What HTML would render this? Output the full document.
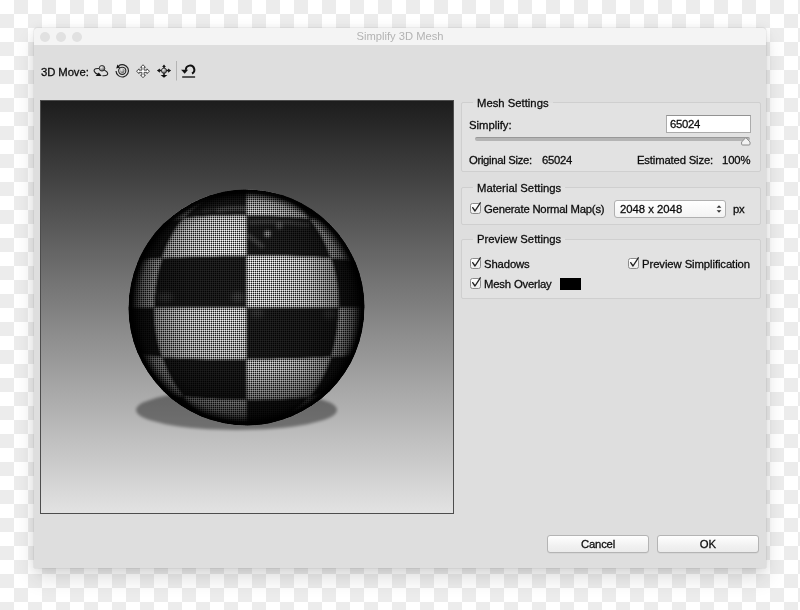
<!DOCTYPE html>
<html><head><meta charset="utf-8"><title>Simplify 3D Mesh</title>
<style>
*{box-sizing:border-box;margin:0;padding:0}
html,body{width:800px;height:610px;overflow:hidden}
body{position:relative;font-family:"Liberation Sans",sans-serif;font-size:11px;color:#0c0c0c;-webkit-text-stroke:.28px #0c0c0c;
 background-color:#fff;
 background-image:conic-gradient(#ececec 25%,#fff 0 50%,#ececec 0 75%,#fff 0);
 background-size:28px 28px;background-position:0 0}
.win{position:absolute;left:34px;top:28px;width:732px;height:540px;background:#dfdede;border-radius:3px 3px 0 0;
 box-shadow:0 11px 20px rgba(0,0,0,.12),0 1px 12px rgba(0,0,0,.09),0 0 1px rgba(0,0,0,.45)}
.tb{position:absolute;left:0;top:0;right:0;height:17px;background:#f4f4f4;border-radius:3px 3px 0 0}
.tl{position:absolute;top:4px;width:10px;height:10px;border-radius:50%;background:#e1e1e1}
.title{position:absolute;left:0;right:0;top:2px;text-align:center;font-size:11.2px;color:#b3b3b3;-webkit-text-stroke:0;line-height:13px}
.abs{position:absolute;white-space:nowrap;line-height:14px}
.grp{position:absolute;border:1px solid #cfcfcf;border-radius:2px;background:#e3e2e2}
.gt{position:absolute;background:linear-gradient(#dfdede 0,#dfdede 5.5px,#e3e2e2 5.5px);padding:0 4px;line-height:12px;font-size:11.3px}
.cb{position:absolute;width:11px;height:11px;border:1px solid #8c8c8c;border-radius:2.5px;background:linear-gradient(#fff,#ececec)}
.btn{position:absolute;height:18px;border:1px solid #b4b4b4;border-radius:3px;background:linear-gradient(#fff,#f1f1f1 60%,#ebebeb);
 text-align:center;line-height:16px;font-size:11.3px;box-shadow:0 .5px 0 rgba(0,0,0,.08)}
</style></head><body><div id="root" style="position:absolute;left:0;top:0;width:800px;height:610px;filter:grayscale(1)">
<div class="win">
<div class="tb"><div class="tl" style="left:6px"></div><div class="tl" style="left:22px"></div><div class="tl" style="left:38px"></div>
<div class="title">Simplify 3D Mesh</div></div>
</div>
<div class="abs" style="left:41px;top:65px;font-size:11.3px;letter-spacing:-.08px">3D Move:</div>
<svg class="abs" style="left:90px;top:56px" width="112" height="30" viewBox="90 56 112 30">
<defs>
<radialGradient id="ball" cx=".35" cy=".3" r=".8"><stop offset="0" stop-color="#f2f2f2"/><stop offset=".55" stop-color="#9a9a9a"/><stop offset="1" stop-color="#3a3a3a"/></radialGradient>
</defs>
<!-- orbit -->
<g transform="rotate(16 101.2 72)"><path d="M103.4 75.2 A7 3.2 0 1 0 99.2 75.3" fill="none" stroke="#222" stroke-width="1.1"/></g>
<path d="M95.7 75.9 L101.7 75.9 L98.8 72.4z" fill="#111"/>
<circle cx="102" cy="68.3" r="2.8" fill="url(#ball)" stroke="#2a2a2a" stroke-width=".9"/>
<!-- roll -->
<path d="M118.7 65.7 A6.2 6.2 0 1 1 116.05 70.9" fill="none" stroke="#222" stroke-width="1.2"/>
<path d="M116.2 68.5 L120.2 67.5 L117.5 64.6z" fill="#111"/>
<circle cx="122.25" cy="70.8" r="3.6" fill="#e8e8e8" stroke="#222" stroke-width="1.1"/>
<circle cx="122.25" cy="70.8" r="2.3" fill="url(#ball)"/>
<!-- pan -->
<path d="M143.00 64.75L145.40 67.35L144.10 67.35L144.10 70.15L146.90 70.15L146.90 68.85L149.50 71.25L146.90 73.65L146.90 72.35L144.10 72.35L144.10 75.15L145.40 75.15L143.00 77.75L140.60 75.15L141.90 75.15L141.90 72.35L139.10 72.35L139.10 73.65L136.50 71.25L139.10 68.85L139.10 70.15L141.90 70.15L141.90 67.35L140.60 67.35z" fill="#fff" stroke="#3a3a3a" stroke-width=".9" stroke-linejoin="round"/>
<!-- slide -->
<path d="M164 64.6 L165.9 66.9 H162.1z M156.9 70.6 L159.9 68.5 V72.7z M171.1 70.6 L168.1 68.5 V72.7z M164 77.8 L160.6 75.1 H167.4z" fill="#111"/>
<path d="M164 66.5V75.5M159.5 70.6H168.5" stroke="#111" stroke-width="1.5"/>
<circle cx="164" cy="70.7" r="2.6" fill="url(#ball)" stroke="#222" stroke-width=".8"/>
<!-- sep -->
<rect x="176" y="61" width="1" height="19.5" fill="#b4b4b4"/>
<!-- reset -->
<path d="M185.9 69.9 A4.2 4.2 0 1 1 192.0 73.5" fill="none" stroke="#111" stroke-width="2"/>
<path d="M181.1 69.8 H188.1 L184.7 73.7z" fill="#111"/>
<rect x="182.2" y="76.2" width="12.9" height="1.6" fill="#333"/>
</svg>

<svg class="abs" style="left:40px;top:100px" width="414" height="414" viewBox="40 100 414 414">
<defs>
<linearGradient id="bg" x1="0" y1="0" x2="0" y2="1"><stop offset="0" stop-color="#1c1c1c"/><stop offset="1" stop-color="#e3e3e3"/></linearGradient>
<clipPath id="sc"><circle cx="246.5" cy="307.5" r="118.0"/></clipPath>
<pattern id="mesh" x="0" y="0" width="2" height="2" patternUnits="userSpaceOnUse"><rect x="1" y="1" width="1" height="1" fill="#000" fill-opacity=".9"/><rect x="1" y="0" width="1" height="1" fill="#000" fill-opacity=".32"/><rect x="0" y="1" width="1" height="1" fill="#000" fill-opacity=".32"/></pattern>
<radialGradient id="rim" cx="246.5" cy="307.5" r="118.0" gradientUnits="userSpaceOnUse">
<stop offset=".6" stop-color="#000" stop-opacity="0"/><stop offset=".82" stop-color="#000" stop-opacity=".1"/><stop offset=".91" stop-color="#000" stop-opacity=".32"/><stop offset=".95" stop-color="#000" stop-opacity=".7"/><stop offset=".972" stop-color="#000" stop-opacity=".96"/><stop offset="1" stop-color="#000" stop-opacity="1"/></radialGradient>
<linearGradient id="side" x1="0" y1="0" x2="1" y2="0"><stop offset="0" stop-color="#000" stop-opacity=".7"/><stop offset=".06" stop-color="#000" stop-opacity=".5"/><stop offset=".14" stop-color="#000" stop-opacity=".3"/><stop offset=".26" stop-color="#000" stop-opacity=".08"/><stop offset=".4" stop-color="#000" stop-opacity="0"/><stop offset=".6" stop-color="#000" stop-opacity="0"/><stop offset=".74" stop-color="#000" stop-opacity=".08"/><stop offset=".86" stop-color="#000" stop-opacity=".3"/><stop offset=".94" stop-color="#000" stop-opacity=".5"/><stop offset="1" stop-color="#000" stop-opacity=".7"/></linearGradient>
<linearGradient id="shade" x1="0" y1="0" x2="0" y2="1"><stop offset="0" stop-color="#000" stop-opacity="0"/><stop offset=".25" stop-color="#000" stop-opacity="0"/><stop offset=".55" stop-color="#000" stop-opacity=".04"/><stop offset=".76" stop-color="#000" stop-opacity=".16"/><stop offset=".86" stop-color="#000" stop-opacity=".4"/><stop offset="1" stop-color="#000" stop-opacity=".65"/></linearGradient>
<filter id="bl" x="-30%" y="-30%" width="160%" height="160%"><feGaussianBlur stdDeviation="3"/></filter>
<filter id="b1" x="-10%" y="-10%" width="120%" height="120%"><feGaussianBlur stdDeviation="0.8"/></filter>
<filter id="b3" x="-50%" y="-50%" width="200%" height="200%"><feGaussianBlur stdDeviation="1.6"/></filter>
<filter id="b15" x="-10%" y="-30%" width="120%" height="160%"><feGaussianBlur stdDeviation="1.4"/></filter>
<filter id="b25" x="-50%" y="-50%" width="200%" height="200%"><feGaussianBlur stdDeviation="2.6"/></filter>
<filter id="b2" x="-50%" y="-50%" width="200%" height="200%"><feGaussianBlur stdDeviation="4"/></filter>
</defs>
<rect x="40" y="100" width="414" height="414" fill="url(#bg)"/>
<ellipse cx="236.5" cy="410" rx="100.5" ry="20" fill="#000" fill-opacity=".4" filter="url(#b15)"/>
<g clip-path="url(#sc)">
<circle cx="246.5" cy="307.5" r="118.0" fill="#1a1a1a"/>
<g filter="url(#b1)">
<path fill="#fbfbfb" d="M204.5 197.2L204.5 197.2L204.5 197.2L204.5 197.2L204.5 197.2L204.5 197.2L204.5 197.2L205.4 196.9L206.7 196.5L208.2 196.2L209.8 195.8L211.6 195.5L213.6 195.2L213.6 195.2L216.3 194.1L219.0 193.1L221.8 192.3L224.5 191.6L227.3 191.1L231.6 190.4L238.9 189.7L246.4 189.5L246.4 189.5L246.4 189.5L246.4 189.5L246.4 189.5L246.4 189.5L246.4 189.5L246.4 189.5L246.4 189.5L246.4 189.5L246.4 189.5L246.4 189.5L246.4 189.5L246.4 189.5L246.4 189.5L246.4 189.5L246.4 189.5L246.4 189.5L246.4 189.5L246.4 189.5L246.4 189.5L246.4 189.5L246.4 189.5L238.9 189.7L231.6 190.4L226.2 191.3L221.3 192.2L216.8 193.3L212.6 194.5L208.5 195.8L204.5 197.2ZM164.0 223.1L164.0 223.1L164.0 223.1L164.0 223.1L164.6 222.7L165.6 222.1L167.1 221.5L168.9 220.9L171.1 220.4L173.6 219.8L176.5 219.3L179.8 218.8L183.4 218.3L183.4 218.3L185.7 215.7L188.0 213.2L190.4 210.8L192.8 208.6L195.3 206.4L197.8 204.4L200.4 202.5L202.9 200.8L205.6 199.2L208.2 197.7L210.9 196.4L213.6 195.2L213.6 195.2L211.6 195.5L209.8 195.8L208.2 196.2L206.7 196.5L205.4 196.9L204.5 197.2L204.5 197.2L204.5 197.2L204.5 197.2L204.5 197.2L204.5 197.2L204.5 197.2L204.5 197.2L200.6 198.8L196.8 200.5L193.2 202.2L189.6 204.1L186.1 206.1L182.7 208.3L179.3 210.5L176.1 212.8L172.9 215.2L169.9 217.8L166.9 220.4L164.0 223.1ZM128.5 307.5L128.5 307.5L128.5 307.5L128.6 307.5L129.3 307.5L130.4 307.5L132.2 307.5L134.4 307.5L137.3 307.5L140.7 307.5L144.6 307.5L149.2 307.5L154.2 307.5L154.2 307.5L154.3 303.2L154.4 299.0L154.7 294.7L155.1 290.5L155.6 286.3L156.2 282.1L156.9 278.0L157.7 273.9L158.6 269.8L159.7 265.8L160.8 261.9L162.0 258.0L162.0 258.0L157.3 258.4L153.1 258.7L149.4 259.1L146.2 259.5L143.5 259.9L141.3 260.4L139.7 260.8L138.5 261.2L137.8 261.6L137.7 261.8L137.7 261.8L137.7 261.8L137.7 261.8L136.2 265.5L134.9 269.1L133.7 272.9L132.6 276.6L131.7 280.4L130.8 284.2L130.1 288.1L129.5 291.9L129.1 295.8L128.8 299.7L128.6 303.6L128.5 307.5ZM164.0 391.9L164.0 391.9L164.0 391.9L164.0 391.9L164.6 392.3L165.6 392.9L167.1 393.5L168.9 394.1L171.1 394.6L173.6 395.2L176.5 395.7L179.8 396.2L183.4 396.7L183.4 396.7L181.2 393.9L179.1 391.1L177.0 388.1L175.0 385.0L173.1 381.9L171.3 378.6L169.5 375.2L167.8 371.7L166.2 368.2L164.7 364.5L163.3 360.8L162.0 357.0L162.0 357.0L157.3 356.6L153.1 356.3L149.4 355.9L146.2 355.5L143.5 355.1L141.3 354.6L139.7 354.2L138.5 353.8L137.8 353.4L137.7 353.2L137.7 353.2L137.7 353.2L137.7 353.2L139.3 356.8L141.0 360.3L142.8 363.8L144.7 367.2L146.7 370.5L148.9 373.8L151.2 377.0L153.5 380.2L156.0 383.2L158.6 386.2L161.2 389.1L164.0 391.9ZM162.0 258.0L167.2 257.7L172.8 257.3L178.8 257.0L185.3 256.8L192.1 256.5L199.2 256.3L206.6 256.1L214.3 256.0L222.2 255.8L230.2 255.7L238.3 255.7L246.5 255.7L246.5 255.7L246.5 251.7L246.5 247.9L246.5 244.1L246.5 240.5L246.5 236.9L246.5 233.4L246.5 230.1L246.5 226.9L246.5 223.8L246.5 220.8L246.5 217.9L246.5 215.2L246.5 215.2L240.5 215.2L234.5 215.3L228.5 215.4L222.7 215.6L217.0 215.8L211.5 216.0L206.2 216.3L201.1 216.7L196.2 217.0L191.7 217.4L187.4 217.9L183.4 218.3L183.4 218.3L181.2 221.1L179.1 223.9L177.0 226.9L175.0 230.0L173.1 233.1L171.3 236.4L169.5 239.8L167.8 243.3L166.2 246.8L164.7 250.5L163.3 254.2L162.0 258.0ZM162.0 357.0L167.2 357.3L172.8 357.7L178.8 358.0L185.3 358.2L192.1 358.5L199.2 358.7L206.6 358.9L214.3 359.0L222.2 359.2L230.2 359.3L238.3 359.3L246.5 359.3L246.5 359.3L246.5 355.3L246.5 351.2L246.5 347.0L246.5 342.8L246.5 338.5L246.5 334.2L246.5 329.8L246.5 325.4L246.5 320.9L246.5 316.5L246.5 312.0L246.5 307.5L246.5 307.5L237.5 307.5L228.6 307.5L219.8 307.5L211.2 307.5L202.8 307.5L194.7 307.5L186.9 307.5L179.5 307.5L172.4 307.5L165.9 307.5L159.8 307.5L154.2 307.5L154.2 307.5L154.3 311.8L154.4 316.0L154.7 320.3L155.1 324.5L155.6 328.7L156.2 332.9L156.9 337.0L157.7 341.1L158.6 345.2L159.7 349.2L160.8 353.1L162.0 357.0ZM213.6 419.8L215.7 420.1L218.0 420.4L220.5 420.7L223.0 420.9L225.7 421.1L228.5 421.3L231.3 421.5L234.3 421.6L237.3 421.7L240.3 421.8L243.4 421.8L246.5 421.8L246.5 421.8L246.5 420.8L246.5 419.6L246.5 418.2L246.5 416.7L246.5 415.1L246.5 413.3L246.5 411.4L246.5 409.4L246.5 407.2L246.5 404.8L246.5 402.4L246.5 399.8L246.5 399.8L240.5 399.8L234.5 399.7L228.5 399.6L222.7 399.4L217.0 399.2L211.5 399.0L206.2 398.7L201.1 398.3L196.2 398.0L191.7 397.6L187.4 397.1L183.4 396.7L183.4 396.7L185.7 399.3L188.0 401.8L190.4 404.2L192.8 406.4L195.3 408.6L197.8 410.6L200.4 412.5L202.9 414.2L205.6 415.8L208.2 417.3L210.9 418.6L213.6 419.8ZM246.4 425.5L246.4 425.5L246.4 425.5L246.4 425.5L246.4 425.5L246.4 425.5L246.4 425.5L246.4 425.5L246.4 425.5L246.4 425.5L246.4 425.5L246.4 425.5L246.5 425.5L246.5 425.5L246.5 425.5L246.5 425.5L246.5 425.5L246.5 425.5L246.5 425.5L246.5 425.4L246.5 425.1L246.5 424.7L246.5 424.2L246.5 423.6L246.5 422.8L246.5 421.8L246.5 421.8L243.4 421.8L240.3 421.8L237.3 421.7L234.3 421.6L231.3 421.5L228.5 421.3L225.7 421.1L223.0 420.9L220.5 420.7L218.0 420.4L215.7 420.1L213.6 419.8L213.6 419.8L216.3 420.9L219.0 421.9L221.8 422.7L224.5 423.4L227.3 423.9L231.6 424.6L238.9 425.3L246.4 425.5L246.4 425.5L246.4 425.5L246.4 425.5L246.4 425.5ZM246.5 193.2L249.6 193.2L252.7 193.2L255.7 193.3L258.7 193.4L261.7 193.5L264.5 193.7L267.3 193.9L270.0 194.1L272.5 194.3L275.0 194.6L277.3 194.9L279.4 195.2L279.4 195.2L276.7 194.1L274.0 193.1L271.2 192.3L268.5 191.6L265.7 191.1L261.4 190.4L254.1 189.7L246.6 189.5L246.6 189.5L246.6 189.5L246.6 189.5L246.6 189.5L246.6 189.5L246.6 189.5L246.6 189.5L246.6 189.5L246.6 189.5L246.6 189.5L246.6 189.5L246.6 189.5L246.6 189.5L246.6 189.5L246.6 189.5L246.6 189.5L246.5 189.5L246.5 189.5L246.5 189.5L246.5 189.5L246.5 189.5L246.5 189.5L246.5 189.5L246.5 189.6L246.5 189.9L246.5 190.3L246.5 190.8L246.5 191.4L246.5 192.2L246.5 193.2ZM246.5 215.2L252.5 215.2L258.5 215.3L264.5 215.4L270.3 215.6L276.0 215.8L281.5 216.0L286.8 216.3L291.9 216.7L296.8 217.0L301.3 217.4L305.6 217.9L309.6 218.3L309.6 218.3L307.3 215.7L305.0 213.2L302.6 210.8L300.2 208.6L297.7 206.4L295.2 204.4L292.6 202.5L290.1 200.8L287.4 199.2L284.8 197.7L282.1 196.4L279.4 195.2L279.4 195.2L277.3 194.9L275.0 194.6L272.5 194.3L270.0 194.1L267.3 193.9L264.5 193.7L261.7 193.5L258.7 193.4L255.7 193.3L252.7 193.2L249.6 193.2L246.5 193.2L246.5 193.2L246.5 194.2L246.5 195.4L246.5 196.8L246.5 198.3L246.5 199.9L246.5 201.7L246.5 203.6L246.5 205.6L246.5 207.8L246.5 210.2L246.5 212.6L246.5 215.2ZM246.5 307.5L255.5 307.5L264.4 307.5L273.2 307.5L281.8 307.5L290.2 307.5L298.3 307.5L306.1 307.5L313.5 307.5L320.6 307.5L327.1 307.5L333.2 307.5L338.8 307.5L338.8 307.5L338.7 303.2L338.6 299.0L338.3 294.7L337.9 290.5L337.4 286.3L336.8 282.1L336.1 278.0L335.3 273.9L334.4 269.8L333.3 265.8L332.2 261.9L331.0 258.0L331.0 258.0L325.8 257.7L320.2 257.3L314.2 257.0L307.7 256.8L300.9 256.5L293.8 256.3L286.4 256.1L278.7 256.0L270.8 255.8L262.8 255.7L254.7 255.7L246.5 255.7L246.5 255.7L246.5 259.7L246.5 263.8L246.5 268.0L246.5 272.2L246.5 276.5L246.5 280.8L246.5 285.2L246.5 289.6L246.5 294.1L246.5 298.5L246.5 303.0L246.5 307.5ZM246.5 399.8L252.5 399.8L258.5 399.7L264.5 399.6L270.3 399.4L276.0 399.2L281.5 399.0L286.8 398.7L291.9 398.3L296.8 398.0L301.3 397.6L305.6 397.1L309.6 396.7L309.6 396.7L311.8 393.9L313.9 391.1L316.0 388.1L318.0 385.0L319.9 381.9L321.7 378.6L323.5 375.2L325.2 371.7L326.8 368.2L328.3 364.5L329.7 360.8L331.0 357.0L331.0 357.0L325.8 357.3L320.2 357.7L314.2 358.0L307.7 358.2L300.9 358.5L293.8 358.7L286.4 358.9L278.7 359.0L270.8 359.2L262.8 359.3L254.7 359.3L246.5 359.3L246.5 359.3L246.5 363.3L246.5 367.1L246.5 370.9L246.5 374.5L246.5 378.1L246.5 381.6L246.5 384.9L246.5 388.1L246.5 391.2L246.5 394.2L246.5 397.1L246.5 399.8ZM331.0 258.0L335.7 258.4L339.9 258.7L343.6 259.1L346.8 259.5L349.5 259.9L351.7 260.4L353.3 260.8L354.5 261.2L355.2 261.6L355.3 261.8L355.3 261.8L355.3 261.8L355.3 261.8L353.7 258.2L352.0 254.7L350.2 251.2L348.3 247.8L346.3 244.5L344.1 241.2L341.8 238.0L339.5 234.8L337.0 231.8L334.4 228.8L331.8 225.9L329.0 223.1L329.0 223.1L329.0 223.1L329.0 223.1L329.0 223.1L328.4 222.7L327.4 222.1L325.9 221.5L324.1 220.9L321.9 220.4L319.4 219.8L316.5 219.3L313.2 218.8L309.6 218.3L309.6 218.3L311.8 221.1L313.9 223.9L316.0 226.9L318.0 230.0L319.9 233.1L321.7 236.4L323.5 239.8L325.2 243.3L326.8 246.8L328.3 250.5L329.7 254.2L331.0 258.0ZM331.0 357.0L335.7 356.6L339.9 356.3L343.6 355.9L346.8 355.5L349.5 355.1L351.7 354.6L353.3 354.2L354.5 353.8L355.2 353.4L355.3 353.2L355.3 353.2L355.3 353.2L355.3 353.2L356.8 349.5L358.1 345.9L359.3 342.1L360.4 338.4L361.3 334.6L362.2 330.8L362.9 326.9L363.5 323.1L363.9 319.2L364.2 315.3L364.4 311.4L364.5 307.5L364.5 307.5L364.5 307.5L364.5 307.5L364.4 307.5L363.7 307.5L362.6 307.5L360.8 307.5L358.6 307.5L355.7 307.5L352.3 307.5L348.4 307.5L343.8 307.5L338.8 307.5L338.8 307.5L338.7 311.8L338.6 316.0L338.3 320.3L337.9 324.5L337.4 328.7L336.8 332.9L336.1 337.0L335.3 341.1L334.4 345.2L333.3 349.2L332.2 353.1L331.0 357.0ZM279.4 419.8L281.4 419.5L283.2 419.2L284.8 418.8L286.3 418.5L287.6 418.1L288.5 417.8L288.5 417.8L288.5 417.8L288.5 417.8L288.5 417.8L288.5 417.8L288.5 417.8L288.5 417.8L292.4 416.2L296.2 414.5L299.8 412.8L303.4 410.9L306.9 408.9L310.3 406.7L313.7 404.5L316.9 402.2L320.1 399.8L323.1 397.2L326.1 394.6L329.0 391.9L329.0 391.9L329.0 391.9L329.0 391.9L329.0 391.9L328.4 392.3L327.4 392.9L325.9 393.5L324.1 394.1L321.9 394.6L319.4 395.2L316.5 395.7L313.2 396.2L309.6 396.7L309.6 396.7L307.3 399.3L305.0 401.8L302.6 404.2L300.2 406.4L297.7 408.6L295.2 410.6L292.6 412.5L290.1 414.2L287.4 415.8L284.8 417.3L282.1 418.6L279.4 419.8ZM246.6 425.5L246.6 425.5L246.6 425.5L246.6 425.5L246.6 425.5L246.6 425.5L246.6 425.5L246.6 425.5L246.6 425.5L246.6 425.5L246.6 425.5L246.6 425.5L246.6 425.5L246.6 425.5L246.6 425.5L246.6 425.5L246.6 425.5L246.6 425.5L254.1 425.3L261.4 424.6L266.8 423.7L271.7 422.8L276.2 421.7L280.4 420.5L284.5 419.2L288.5 417.8L288.5 417.8L288.5 417.8L288.5 417.8L288.5 417.8L288.5 417.8L288.5 417.8L288.5 417.8L287.6 418.1L286.3 418.5L284.8 418.8L283.2 419.2L281.4 419.5L279.4 419.8L279.4 419.8L276.7 420.9L274.0 421.9L271.2 422.7L268.5 423.4L265.7 423.9L261.4 424.6L254.1 425.3L246.6 425.5L246.6 425.5L246.6 425.5L246.6 425.5L246.6 425.5Z"/>
<path fill="#272727" d="M137.7 261.8L137.7 261.8L137.7 261.8L137.8 261.6L138.5 261.2L139.7 260.8L141.3 260.4L143.5 259.9L146.2 259.5L149.4 259.1L153.1 258.7L157.3 258.4L162.0 258.0L162.0 258.0L163.3 254.2L164.7 250.5L166.2 246.8L167.8 243.3L169.5 239.8L171.3 236.4L173.1 233.1L175.0 230.0L177.0 226.9L179.1 223.9L181.2 221.1L183.4 218.3L183.4 218.3L179.8 218.8L176.5 219.3L173.6 219.8L171.1 220.4L168.9 220.9L167.1 221.5L165.6 222.1L164.6 222.7L164.0 223.1L164.0 223.1L164.0 223.1L164.0 223.1L164.0 223.1L161.2 225.9L158.6 228.8L156.0 231.8L153.5 234.8L151.2 238.0L148.9 241.2L146.7 244.5L144.7 247.8L142.8 251.2L141.0 254.7L139.3 258.2L137.7 261.8ZM137.7 353.2L137.7 353.2L137.7 353.2L137.8 353.4L138.5 353.8L139.7 354.2L141.3 354.6L143.5 355.1L146.2 355.5L149.4 355.9L153.1 356.3L157.3 356.6L162.0 357.0L162.0 357.0L160.8 353.1L159.7 349.2L158.6 345.2L157.7 341.1L156.9 337.0L156.2 332.9L155.6 328.7L155.1 324.5L154.7 320.3L154.4 316.0L154.3 311.8L154.2 307.5L154.2 307.5L149.2 307.5L144.6 307.5L140.7 307.5L137.3 307.5L134.4 307.5L132.2 307.5L130.4 307.5L129.3 307.5L128.6 307.5L128.5 307.5L128.5 307.5L128.5 307.5L128.5 307.5L128.6 311.4L128.8 315.3L129.1 319.2L129.5 323.1L130.1 326.9L130.8 330.8L131.7 334.6L132.6 338.4L133.7 342.1L134.9 345.9L136.2 349.5L137.7 353.2ZM204.5 417.8L204.5 417.8L204.5 417.8L204.5 417.8L204.5 417.8L204.5 417.8L204.5 417.8L205.4 418.1L206.7 418.5L208.2 418.8L209.8 419.2L211.6 419.5L213.6 419.8L213.6 419.8L210.9 418.6L208.2 417.3L205.6 415.8L202.9 414.2L200.4 412.5L197.8 410.6L195.3 408.6L192.8 406.4L190.4 404.2L188.0 401.8L185.7 399.3L183.4 396.7L183.4 396.7L179.8 396.2L176.5 395.7L173.6 395.2L171.1 394.6L168.9 394.1L167.1 393.5L165.6 392.9L164.6 392.3L164.0 391.9L164.0 391.9L164.0 391.9L164.0 391.9L164.0 391.9L166.9 394.6L169.9 397.2L172.9 399.8L176.1 402.2L179.3 404.5L182.7 406.7L186.1 408.9L189.6 410.9L193.2 412.8L196.8 414.5L200.6 416.2L204.5 417.8ZM246.4 425.5L246.4 425.5L246.4 425.5L246.4 425.5L246.4 425.5L246.4 425.5L246.4 425.5L246.4 425.5L246.4 425.5L246.4 425.5L246.4 425.5L246.4 425.5L246.4 425.5L246.4 425.5L246.4 425.5L246.4 425.5L246.4 425.5L246.4 425.5L238.9 425.3L231.6 424.6L227.3 423.9L224.5 423.4L221.8 422.7L219.0 421.9L216.3 420.9L213.6 419.8L213.6 419.8L211.6 419.5L209.8 419.2L208.2 418.8L206.7 418.5L205.4 418.1L204.5 417.8L204.5 417.8L204.5 417.8L204.5 417.8L204.5 417.8L204.5 417.8L204.5 417.8L204.5 417.8L208.5 419.2L212.6 420.5L216.8 421.7L221.3 422.8L226.2 423.7L231.6 424.6L238.9 425.3L246.4 425.5L246.4 425.5L246.4 425.5L246.4 425.5L246.4 425.5ZM213.6 195.2L215.7 194.9L218.0 194.6L220.5 194.3L223.0 194.1L225.7 193.9L228.5 193.7L231.3 193.5L234.3 193.4L237.3 193.3L240.3 193.2L243.4 193.2L246.5 193.2L246.5 193.2L246.5 192.2L246.5 191.4L246.5 190.8L246.5 190.3L246.5 189.9L246.5 189.6L246.5 189.5L246.5 189.5L246.5 189.5L246.5 189.5L246.5 189.5L246.5 189.5L246.5 189.5L246.4 189.5L246.4 189.5L246.4 189.5L246.4 189.5L246.4 189.5L246.4 189.5L246.4 189.5L246.4 189.5L246.4 189.5L246.4 189.5L246.4 189.5L246.4 189.5L246.4 189.5L246.4 189.5L246.4 189.5L246.4 189.5L246.4 189.5L238.9 189.7L231.6 190.4L227.3 191.1L224.5 191.6L221.8 192.3L219.0 193.1L216.3 194.1L213.6 195.2ZM183.4 218.3L187.4 217.9L191.7 217.4L196.2 217.0L201.1 216.7L206.2 216.3L211.5 216.0L217.0 215.8L222.7 215.6L228.5 215.4L234.5 215.3L240.5 215.2L246.5 215.2L246.5 215.2L246.5 212.6L246.5 210.2L246.5 207.8L246.5 205.6L246.5 203.6L246.5 201.7L246.5 199.9L246.5 198.3L246.5 196.8L246.5 195.4L246.5 194.2L246.5 193.2L246.5 193.2L243.4 193.2L240.3 193.2L237.3 193.3L234.3 193.4L231.3 193.5L228.5 193.7L225.7 193.9L223.0 194.1L220.5 194.3L218.0 194.6L215.7 194.9L213.6 195.2L213.6 195.2L210.9 196.4L208.2 197.7L205.6 199.2L202.9 200.8L200.4 202.5L197.8 204.4L195.3 206.4L192.8 208.6L190.4 210.8L188.0 213.2L185.7 215.7L183.4 218.3ZM154.2 307.5L159.8 307.5L165.9 307.5L172.4 307.5L179.5 307.5L186.9 307.5L194.7 307.5L202.8 307.5L211.2 307.5L219.8 307.5L228.6 307.5L237.5 307.5L246.5 307.5L246.5 307.5L246.5 303.0L246.5 298.5L246.5 294.1L246.5 289.6L246.5 285.2L246.5 280.8L246.5 276.5L246.5 272.2L246.5 268.0L246.5 263.8L246.5 259.7L246.5 255.7L246.5 255.7L238.3 255.7L230.2 255.7L222.2 255.8L214.3 256.0L206.6 256.1L199.2 256.3L192.1 256.5L185.3 256.8L178.8 257.0L172.8 257.3L167.2 257.7L162.0 258.0L162.0 258.0L160.8 261.9L159.7 265.8L158.6 269.8L157.7 273.9L156.9 278.0L156.2 282.1L155.6 286.3L155.1 290.5L154.7 294.7L154.4 299.0L154.3 303.2L154.2 307.5ZM183.4 396.7L187.4 397.1L191.7 397.6L196.2 398.0L201.1 398.3L206.2 398.7L211.5 399.0L217.0 399.2L222.7 399.4L228.5 399.6L234.5 399.7L240.5 399.8L246.5 399.8L246.5 399.8L246.5 397.1L246.5 394.2L246.5 391.2L246.5 388.1L246.5 384.9L246.5 381.6L246.5 378.1L246.5 374.5L246.5 370.9L246.5 367.1L246.5 363.3L246.5 359.3L246.5 359.3L238.3 359.3L230.2 359.3L222.2 359.2L214.3 359.0L206.6 358.9L199.2 358.7L192.1 358.5L185.3 358.2L178.8 358.0L172.8 357.7L167.2 357.3L162.0 357.0L162.0 357.0L163.3 360.8L164.7 364.5L166.2 368.2L167.8 371.7L169.5 375.2L171.3 378.6L173.1 381.9L175.0 385.0L177.0 388.1L179.1 391.1L181.2 393.9L183.4 396.7ZM246.5 255.7L254.7 255.7L262.8 255.7L270.8 255.8L278.7 256.0L286.4 256.1L293.8 256.3L300.9 256.5L307.7 256.8L314.2 257.0L320.2 257.3L325.8 257.7L331.0 258.0L331.0 258.0L329.7 254.2L328.3 250.5L326.8 246.8L325.2 243.3L323.5 239.8L321.7 236.4L319.9 233.1L318.0 230.0L316.0 226.9L313.9 223.9L311.8 221.1L309.6 218.3L309.6 218.3L305.6 217.9L301.3 217.4L296.8 217.0L291.9 216.7L286.8 216.3L281.5 216.0L276.0 215.8L270.3 215.6L264.5 215.4L258.5 215.3L252.5 215.2L246.5 215.2L246.5 215.2L246.5 217.9L246.5 220.8L246.5 223.8L246.5 226.9L246.5 230.1L246.5 233.4L246.5 236.9L246.5 240.5L246.5 244.1L246.5 247.9L246.5 251.7L246.5 255.7ZM246.5 359.3L254.7 359.3L262.8 359.3L270.8 359.2L278.7 359.0L286.4 358.9L293.8 358.7L300.9 358.5L307.7 358.2L314.2 358.0L320.2 357.7L325.8 357.3L331.0 357.0L331.0 357.0L332.2 353.1L333.3 349.2L334.4 345.2L335.3 341.1L336.1 337.0L336.8 332.9L337.4 328.7L337.9 324.5L338.3 320.3L338.6 316.0L338.7 311.8L338.8 307.5L338.8 307.5L333.2 307.5L327.1 307.5L320.6 307.5L313.5 307.5L306.1 307.5L298.3 307.5L290.2 307.5L281.8 307.5L273.2 307.5L264.4 307.5L255.5 307.5L246.5 307.5L246.5 307.5L246.5 312.0L246.5 316.5L246.5 320.9L246.5 325.4L246.5 329.8L246.5 334.2L246.5 338.5L246.5 342.8L246.5 347.0L246.5 351.2L246.5 355.3L246.5 359.3ZM246.5 421.8L249.6 421.8L252.7 421.8L255.7 421.7L258.7 421.6L261.7 421.5L264.5 421.3L267.3 421.1L270.0 420.9L272.5 420.7L275.0 420.4L277.3 420.1L279.4 419.8L279.4 419.8L282.1 418.6L284.8 417.3L287.4 415.8L290.1 414.2L292.6 412.5L295.2 410.6L297.7 408.6L300.2 406.4L302.6 404.2L305.0 401.8L307.3 399.3L309.6 396.7L309.6 396.7L305.6 397.1L301.3 397.6L296.8 398.0L291.9 398.3L286.8 398.7L281.5 399.0L276.0 399.2L270.3 399.4L264.5 399.6L258.5 399.7L252.5 399.8L246.5 399.8L246.5 399.8L246.5 402.4L246.5 404.8L246.5 407.2L246.5 409.4L246.5 411.4L246.5 413.3L246.5 415.1L246.5 416.7L246.5 418.2L246.5 419.6L246.5 420.8L246.5 421.8ZM246.5 425.5L246.6 425.5L246.6 425.5L246.6 425.5L246.6 425.5L246.6 425.5L246.6 425.5L246.6 425.5L246.6 425.5L246.6 425.5L246.6 425.5L246.6 425.5L246.6 425.5L246.6 425.5L246.6 425.5L246.6 425.5L246.6 425.5L246.6 425.5L254.1 425.3L261.4 424.6L265.7 423.9L268.5 423.4L271.2 422.7L274.0 421.9L276.7 420.9L279.4 419.8L279.4 419.8L277.3 420.1L275.0 420.4L272.5 420.7L270.0 420.9L267.3 421.1L264.5 421.3L261.7 421.5L258.7 421.6L255.7 421.7L252.7 421.8L249.6 421.8L246.5 421.8L246.5 421.8L246.5 422.8L246.5 423.6L246.5 424.2L246.5 424.7L246.5 425.1L246.5 425.4L246.5 425.5L246.5 425.5L246.5 425.5L246.5 425.5L246.5 425.5L246.5 425.5ZM279.4 195.2L281.4 195.5L283.2 195.8L284.8 196.2L286.3 196.5L287.6 196.9L288.5 197.2L288.5 197.2L288.5 197.2L288.5 197.2L288.5 197.2L288.5 197.2L288.5 197.2L288.5 197.2L284.5 195.8L280.4 194.5L276.2 193.3L271.7 192.2L266.8 191.3L261.4 190.4L254.1 189.7L246.6 189.5L246.6 189.5L246.6 189.5L246.6 189.5L246.6 189.5L246.6 189.5L246.6 189.5L246.6 189.5L246.6 189.5L246.6 189.5L246.6 189.5L246.6 189.5L246.6 189.5L246.6 189.5L246.6 189.5L246.6 189.5L246.6 189.5L246.6 189.5L246.6 189.5L246.6 189.5L246.6 189.5L246.6 189.5L246.6 189.5L254.1 189.7L261.4 190.4L265.7 191.1L268.5 191.6L271.2 192.3L274.0 193.1L276.7 194.1L279.4 195.2ZM309.6 218.3L313.2 218.8L316.5 219.3L319.4 219.8L321.9 220.4L324.1 220.9L325.9 221.5L327.4 222.1L328.4 222.7L329.0 223.1L329.0 223.1L329.0 223.1L329.0 223.1L329.0 223.1L326.1 220.4L323.1 217.8L320.1 215.2L316.9 212.8L313.7 210.5L310.3 208.3L306.9 206.1L303.4 204.1L299.8 202.2L296.2 200.5L292.4 198.8L288.5 197.2L288.5 197.2L288.5 197.2L288.5 197.2L288.5 197.2L288.5 197.2L288.5 197.2L288.5 197.2L287.6 196.9L286.3 196.5L284.8 196.2L283.2 195.8L281.4 195.5L279.4 195.2L279.4 195.2L282.1 196.4L284.8 197.7L287.4 199.2L290.1 200.8L292.6 202.5L295.2 204.4L297.7 206.4L300.2 208.6L302.6 210.8L305.0 213.2L307.3 215.7L309.6 218.3ZM338.8 307.5L343.8 307.5L348.4 307.5L352.3 307.5L355.7 307.5L358.6 307.5L360.8 307.5L362.6 307.5L363.7 307.5L364.4 307.5L364.5 307.5L364.5 307.5L364.5 307.5L364.5 307.5L364.4 303.6L364.2 299.7L363.9 295.8L363.5 291.9L362.9 288.1L362.2 284.2L361.3 280.4L360.4 276.6L359.3 272.9L358.1 269.1L356.8 265.5L355.3 261.8L355.3 261.8L355.3 261.8L355.3 261.8L355.2 261.6L354.5 261.2L353.3 260.8L351.7 260.4L349.5 259.9L346.8 259.5L343.6 259.1L339.9 258.7L335.7 258.4L331.0 258.0L331.0 258.0L332.2 261.9L333.3 265.8L334.4 269.8L335.3 273.9L336.1 278.0L336.8 282.1L337.4 286.3L337.9 290.5L338.3 294.7L338.6 299.0L338.7 303.2L338.8 307.5ZM309.6 396.7L313.2 396.2L316.5 395.7L319.4 395.2L321.9 394.6L324.1 394.1L325.9 393.5L327.4 392.9L328.4 392.3L329.0 391.9L329.0 391.9L329.0 391.9L329.0 391.9L329.0 391.9L331.8 389.1L334.4 386.2L337.0 383.2L339.5 380.2L341.8 377.0L344.1 373.8L346.3 370.5L348.3 367.2L350.2 363.8L352.0 360.3L353.7 356.8L355.3 353.2L355.3 353.2L355.3 353.2L355.3 353.2L355.2 353.4L354.5 353.8L353.3 354.2L351.7 354.6L349.5 355.1L346.8 355.5L343.6 355.9L339.9 356.3L335.7 356.6L331.0 357.0L331.0 357.0L329.7 360.8L328.3 364.5L326.8 368.2L325.2 371.7L323.5 375.2L321.7 378.6L319.9 381.9L318.0 385.0L316.0 388.1L313.9 391.1L311.8 393.9L309.6 396.7Z"/>
</g>
<g filter="url(#b3)" fill="#fff" stroke="#fff" stroke-linecap="round">
<path d="M251 222.5 Q280 220.5 308 224.5" fill="none" stroke-width="5" stroke-opacity=".2"/>
<circle cx="267.5" cy="233.8" r="3.2" fill-opacity=".65" stroke="none"/>
<circle cx="279.5" cy="225.5" r="3.5" fill-opacity=".3" stroke="none"/>
<path d="M249 236 L262 246" fill="none" stroke-width="5" stroke-opacity=".22"/>
<path d="M218 210 Q232 207.5 245 208.5" fill="none" stroke-width="5" stroke-opacity=".3"/>
<path d="M203 211 L214 209.5" fill="none" stroke-width="3" stroke-opacity=".2"/>
</g><g filter="url(#b25)" fill="#fff">
<ellipse cx="165" cy="297" rx="8" ry="5" fill-opacity=".2"/>
<ellipse cx="238" cy="297" rx="7" ry="5" fill-opacity=".2"/>
<ellipse cx="257" cy="313" rx="7" ry="4.5" fill-opacity=".16"/>
<ellipse cx="330" cy="314" rx="7" ry="5" fill-opacity=".18"/>
</g>
<circle cx="246.5" cy="307.5" r="118.0" fill="url(#mesh)"/>
<circle cx="246.5" cy="307.5" r="118.0" fill="url(#rim)"/>
<circle cx="246.5" cy="307.5" r="118.0" fill="url(#shade)"/>
<circle cx="246.5" cy="307.5" r="118.0" fill="url(#side)"/>
</g>
<rect x="40.5" y="100.5" width="413" height="413" fill="none" stroke="#4d4d4d"/>
</svg>

<!-- Mesh settings -->
<div class="grp" style="left:461px;top:102px;width:300px;height:70px"></div>
<div class="gt" style="left:473px;top:97px">Mesh Settings</div>
<div class="abs" style="left:469px;top:118px;font-size:11.3px;letter-spacing:-0.010px">Simplify:</div>
<div class="abs" style="left:666px;top:115px;width:85px;height:18px;background:#fff;border:1px solid #ababab;border-top-color:#929292;padding-left:3px;line-height:17px;font-size:11.3px;letter-spacing:-.3px">65024</div>
<div class="abs" style="left:475px;top:137px;width:275px;height:4px;border-radius:2px;background:#b4b4b4;border-top:1px solid #989898"></div>
<svg class="abs" style="left:739px;top:135px" width="14" height="12" viewBox="0 0 14 12"><path d="M3.6 10 h6.4 a1 1 0 0 0 1-1 v-2 L6.8 2.6 L2.6 7 v2 a1 1 0 0 0 1 1z" fill="#f2f2f2" stroke="#808080" stroke-width=".9"/></svg>
<div class="abs" style="left:469px;top:153px;font-size:11.3px;letter-spacing:-0.314px">Original Size:</div>
<div class="abs" style="left:542px;top:153px;font-size:11.3px;letter-spacing:-0.284px">65024</div>
<div class="abs" style="left:637px;top:153px;font-size:11.3px;letter-spacing:-0.165px">Estimated Size:</div>
<div class="abs" style="left:722px;top:153px;font-size:11.3px;letter-spacing:-0.150px">100%</div>
<!-- Material settings -->
<div class="grp" style="left:461px;top:187px;width:300px;height:38px"></div>
<div class="gt" style="left:473px;top:182px">Material Settings</div>
<div class="cb" style="left:470px;top:203px"></div><svg class="abs" style="left:470px;top:200px" width="14" height="14" viewBox="0 0 14 14"><path d="M2.7 7.6 L5 11 L10.3 2.8" fill="none" stroke="#222" stroke-width="1.35" stroke-linecap="round" stroke-linejoin="round"/></svg>
<div class="abs" style="left:484px;top:202px;font-size:11.3px;letter-spacing:-0.206px">Generate Normal Map(s)</div>
<div class="abs" style="left:614px;top:200px;width:112px;height:18px;border:1px solid #b0b0b0;border-radius:3px;background:linear-gradient(#fff,#f3f3f3);padding-left:5px;line-height:16px;font-size:11.3px">2048 x 2048</div>
<svg class="abs" style="left:715px;top:204px" width="8" height="10" viewBox="0 0 8 10"><path d="M1.6 3.8 L4 1.2 L6.4 3.8z M1.6 6.2 L4 8.8 L6.4 6.2z" fill="#333"/></svg>
<div class="abs" style="left:733px;top:202px;font-size:11.3px;letter-spacing:-0.370px">px</div>
<!-- Preview settings -->
<div class="grp" style="left:461px;top:239px;width:300px;height:60px"></div>
<div class="gt" style="left:473px;top:233px">Preview Settings</div>
<div class="cb" style="left:470px;top:258px"></div><svg class="abs" style="left:470px;top:255px" width="14" height="14" viewBox="0 0 14 14"><path d="M2.7 7.6 L5 11 L10.3 2.8" fill="none" stroke="#222" stroke-width="1.35" stroke-linecap="round" stroke-linejoin="round"/></svg>
<div class="abs" style="left:484px;top:257px;font-size:11.3px;letter-spacing:-0.126px">Shadows</div>
<div class="cb" style="left:628px;top:258px"></div><svg class="abs" style="left:628px;top:255px" width="14" height="14" viewBox="0 0 14 14"><path d="M2.7 7.6 L5 11 L10.3 2.8" fill="none" stroke="#222" stroke-width="1.35" stroke-linecap="round" stroke-linejoin="round"/></svg>
<div class="abs" style="left:642px;top:257px;font-size:11.3px;letter-spacing:-0.085px">Preview Simplification</div>
<div class="cb" style="left:470px;top:278px"></div><svg class="abs" style="left:470px;top:275px" width="14" height="14" viewBox="0 0 14 14"><path d="M2.7 7.6 L5 11 L10.3 2.8" fill="none" stroke="#222" stroke-width="1.35" stroke-linecap="round" stroke-linejoin="round"/></svg>
<div class="abs" style="left:484px;top:277px;font-size:11.3px;letter-spacing:-0.174px">Mesh Overlay</div>
<div class="abs" style="left:560px;top:278px;width:21px;height:12px;background:#000"></div>
<div class="btn" style="left:547px;top:535px;width:102px;letter-spacing:-.2px">Cancel</div>
<div class="btn" style="left:657px;top:535px;width:102px">OK</div>
</div></body></html>
